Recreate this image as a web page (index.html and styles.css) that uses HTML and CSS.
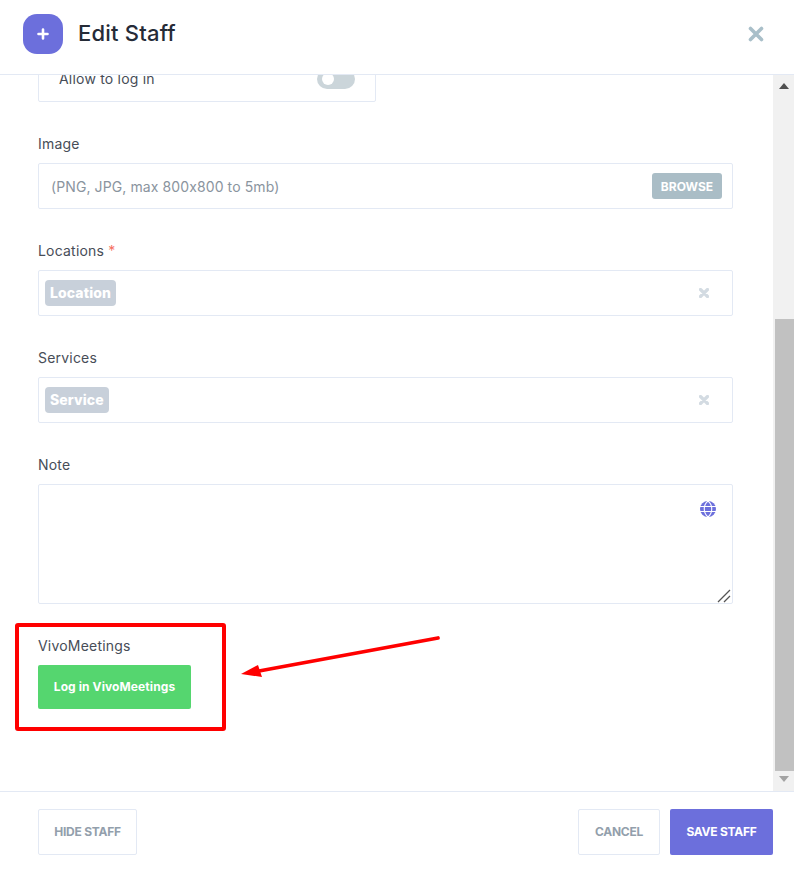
FILE: index.html
```html
<!DOCTYPE html>
<html lang="en">
<head>
  <meta charset="UTF-8">
  <meta name="viewport" content="width=device-width, initial-scale=1.0">
  <title>Edit Staff</title>
  <link rel="stylesheet" href="styles.css">
</head>
<body>
  <div class="modal">
    <header class="modal-header">
      <div class="modal-title">
        <span class="title-icon">
          <svg width="14" height="14" viewBox="0 0 14 14"><path d="M7 2.500v9M2.500 7h9" stroke="#fff" stroke-width="2.600" stroke-linecap="round"/></svg>
        </span>
        <h1>Edit Staff</h1>
      </div>
      <svg class="close-icon" width="16" height="16" viewBox="0 0 16 16"><path d="M2.500 2.500l11 11M13.500 2.500l-11 11" stroke="#a9bfc9" stroke-width="3.600" stroke-linecap="round"/></svg>
    </header>

    <div class="modal-middle">
      <main class="modal-body">
        <div class="login-card">
          <span class="login-text">Allow to log in</span>
          <span class="toggle"></span>
        </div>

        <div class="field">
          <label>Image</label>
          <div class="input-box image-input">
            <span class="placeholder">(PNG, JPG, max 800x800 to 5mb)</span>
            <button class="browse-btn">BROWSE</button>
          </div>
        </div>

        <div class="field">
          <label>Locations <span class="required">*</span></label>
          <div class="input-box select-input">
            <span class="chip">Location</span>
            <svg class="clear-icon" width="10" height="10" viewBox="0 0 10 10"><path d="M1.500 1.500l7 7M8.500 1.500l-7 7" stroke="#d3dbe2" stroke-width="3.200" stroke-linecap="round"/></svg>
          </div>
        </div>

        <div class="field">
          <label>Services</label>
          <div class="input-box select-input">
            <span class="chip">Service</span>
            <svg class="clear-icon" width="10" height="10" viewBox="0 0 10 10"><path d="M1.500 1.500l7 7M8.500 1.500l-7 7" stroke="#d3dbe2" stroke-width="3.200" stroke-linecap="round"/></svg>
          </div>
        </div>

        <div class="field">
          <label>Note</label>
          <div class="note-wrap">
            <textarea class="note-input"></textarea>
            <svg class="globe-icon" width="16" height="16" viewBox="0 0 16 16">
              <circle cx="8" cy="8" r="8" fill="#6c6fdc"/>
              <path d="M0 5.500h16M0 10.500h16M8 0c-5 4-5 12 0 16M8 0c5 4 5 12 0 16" stroke="#fff" stroke-width="1.100" fill="none"/>
            </svg>
            <svg class="grip-icon" width="14" height="14" viewBox="0 0 14 14">
              <path d="M1 13L13 1M7 13l6-6" stroke="#555" stroke-width="1.300"/>
            </svg>
          </div>
        </div>

        <div class="field">
          <label>VivoMeetings</label>
          <button class="meetings-btn">Log in VivoMeetings</button>
        </div>
      </main>

      <div class="scrollbar">
        <span class="arrow-up"></span>
        <span class="scroll-track"><span class="scroll-thumb"></span></span>
        <span class="arrow-down"></span>
      </div>
    </div>

    <footer class="modal-footer">
      <button class="btn btn-hide">HIDE STAFF</button>
      <div class="footer-right">
        <button class="btn btn-cancel">CANCEL</button>
        <button class="btn btn-primary">SAVE STAFF</button>
      </div>
    </footer>
  </div>

  <!-- annotation drawn over the screen -->
  <div class="callout-box"></div>
  <svg class="callout-arrow" width="200" height="46" viewBox="0 0 200 46">
    <path d="M197 4L18 37" stroke="#f00" stroke-width="3.800" stroke-linecap="round"/>
    <path d="M0 40L17 31l4 12z" fill="#f00"/>
  </svg>
</body>
</html>
```

FILE: styles.css
```css
* {
  box-sizing: border-box;
}
body {
  margin: 0;
  font-family: 'Inter', 'Open Sans', sans-serif;
  color: #474d57;
  background: #fff;
}
button {
  font-family: inherit;
  border: none;
  cursor: pointer;
}
.modal {
  display: flex;
  flex-direction: column;
  height: 870px;
}
.modal-header {
  height: 75px;
  flex: none;
  display: flex;
  align-items: center;
  justify-content: space-between;
  padding: 0 30px 7px 23px;
  border-bottom: 1px solid #e3e9f4;
  position: relative;
  z-index: 1;
  background: #fff;
}
.modal-title {
  display: flex;
  align-items: center;
  gap: 15px;
}
.title-icon {
  width: 40px;
  height: 40px;
  border-radius: 14px;
  background: #6c6fdc;
  display: flex;
  align-items: center;
  justify-content: center;
}
.modal-title h1 {
  margin: 0;
  padding-bottom: 2px;
  font-size: 22px;
  font-weight: 500;
  letter-spacing: 0.2px;
  color: #252b37;
}
.modal-middle {
  height: 716px;
  flex: none;
  display: flex;
}
.modal-body {
  flex: 1;
  padding: 0 40px 0 38px;
}
.login-card {
  width: 338px;
  height: 45px;
  margin-top: -18px;
  margin-bottom: 32px;
  padding: 11px 20px 12px 20px;
  border: 1px solid #e3e9f4;
  border-radius: 2px;
  display: flex;
  align-items: center;
  justify-content: space-between;
  font-size: 14px;
}
.login-text {
  margin-bottom: 2px;
  letter-spacing: 0.2px;
}
.toggle {
  width: 38px;
  height: 20px;
  border-radius: 10px;
  background: #cbd5da;
  position: relative;
}
.toggle::after {
  content: "";
  position: absolute;
  left: 5px;
  top: 4px;
  width: 12px;
  height: 12px;
  border-radius: 50%;
  background: #fff;
}
.field {
  margin-bottom: 32px;
}
.field label {
  display: block;
  height: 20px;
  line-height: 20px;
  margin-bottom: 9px;
  font-size: 14px;
  letter-spacing: 0.2px;
}
.required {
  color: #f6705f;
}
.input-box {
  height: 46px;
  border: 1px solid #e3e9f4;
  border-radius: 2px;
  display: flex;
  align-items: center;
  justify-content: space-between;
}
.image-input {
  padding: 0 10px 0 12px;
}
.placeholder {
  font-size: 14px;
  font-feature-settings: "calt" 0;
  letter-spacing: 0.1px;
  color: #8a949e;
}
.browse-btn {
  width: 70px;
  height: 26px;
  border-radius: 3px;
  background: #aabdc6;
  color: #fff;
  font-size: 12px;
  font-weight: 700;
}
.select-input {
  padding: 0 23px 0 6px;
}
.chip {
  height: 26px;
  line-height: 26px;
  padding: 0 5px;
  border-radius: 4px;
  background: #c8d0da;
  color: #fff;
  font-size: 14px;
  font-weight: 800;
  letter-spacing: 0.1px;
}
.note-wrap {
  position: relative;
  height: 120px;
}
.note-input {
  display: block;
  width: 100%;
  height: 120px;
  border: 1px solid #e3e9f4;
  border-radius: 2px;
  resize: none;
  outline: none;
}
.globe-icon {
  position: absolute;
  top: 17px;
  right: 17px;
}
.grip-icon {
  position: absolute;
  right: 2px;
  bottom: 1px;
}
.meetings-btn {
  display: block;
  width: 153px;
  height: 44px;
  padding-bottom: 2px;
  border-radius: 2px;
  background: #55d66f;
  color: #fff;
  font-size: 12px;
  font-weight: 700;
  letter-spacing: 0.1px;
}
.scrollbar {
  width: 21px;
  flex: none;
  background: #f1f1f1;
  display: flex;
  flex-direction: column;
  align-items: center;
}
.arrow-up,
.arrow-down {
  flex: none;
  width: 0;
  height: 0;
  border-left: 5px solid transparent;
  border-right: 5px solid transparent;
}
.arrow-up {
  margin: 8px 0 0;
  border-bottom: 6px solid #505050;
}
.arrow-down {
  margin: 0 0 9px;
  border-top: 6px solid #a3a3a3;
}
.scroll-track {
  flex: 1;
  width: 100%;
  padding: 230px 0 5px 2px;
}
.scroll-thumb {
  display: block;
  height: 100%;
  background: #c1c1c1;
}
.modal-footer {
  flex: 1;
  display: flex;
  justify-content: space-between;
  padding: 17px 21px 15px 38px;
  border-top: 1px solid #e3e9f4;
  position: relative;
  background: #fff;
}
.footer-right {
  display: flex;
  gap: 10px;
}
.btn {
  height: 46px;
  padding: 0 0 2px;
  border: 1px solid #e3e9f4;
  border-radius: 2px;
  background: #fff;
  color: #939fac;
  font-size: 12px;
  font-weight: 700;
  letter-spacing: -0.25px;
}
.btn-hide {
  width: 99px;
}
.btn-cancel {
  width: 82px;
}
.btn-primary {
  width: 103px;
  border: none;
  background: #6c6fdc;
  color: #fff;
}
.callout-box {
  position: absolute;
  left: 15px;
  top: 623px;
  width: 211px;
  height: 108px;
  border: 4px solid #f00;
  border-radius: 3px;
}
.callout-arrow {
  position: absolute;
  left: 241px;
  top: 634px;
}
```
